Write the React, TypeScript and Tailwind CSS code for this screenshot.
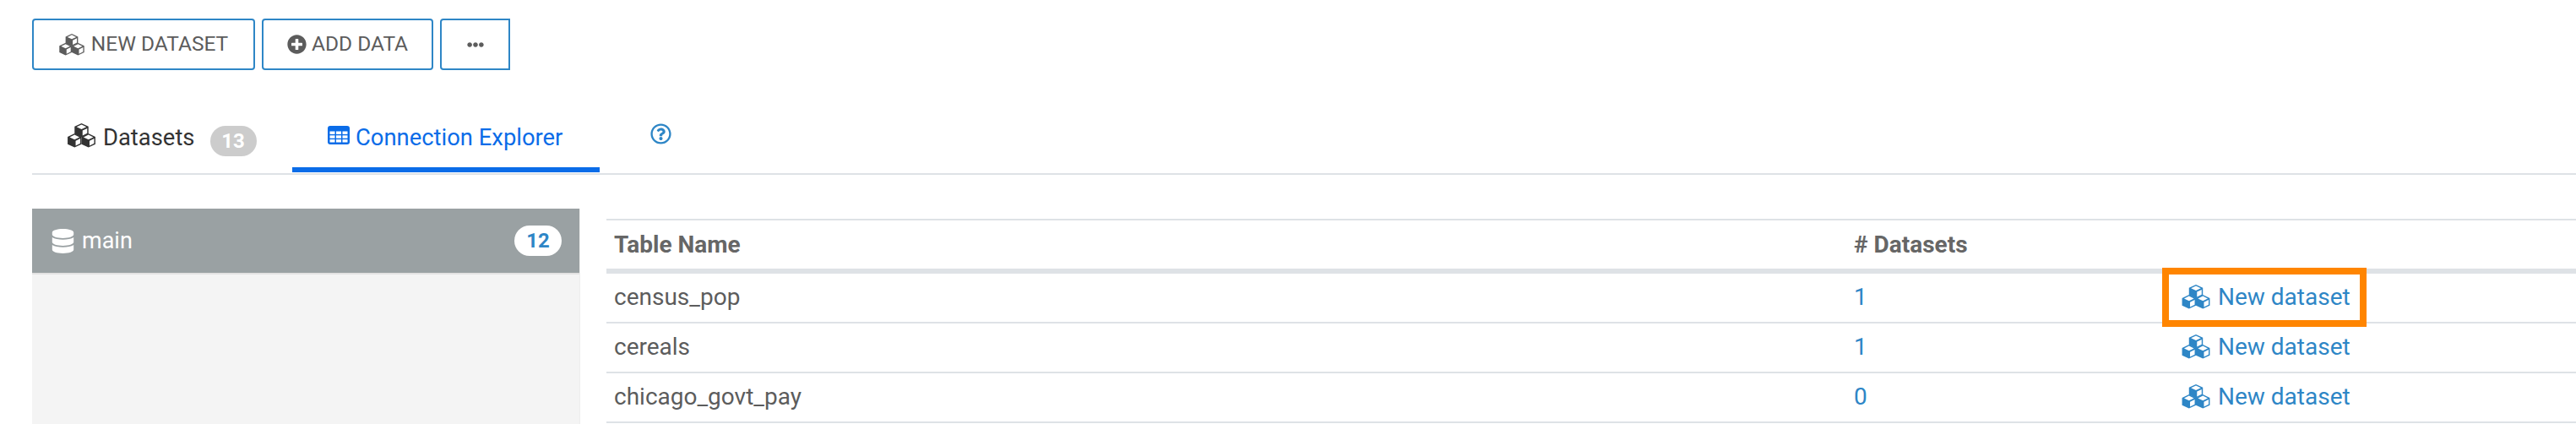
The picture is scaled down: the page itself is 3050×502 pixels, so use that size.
import { FaDatabase, FaEllipsisH, FaPlusCircle, FaRegQuestionCircle } from "react-icons/fa";

const rows = [
  { name: "census_pop", count: 1, highlight: true },
  { name: "cereals", count: 1 },
  { name: "chicago_govt_pay", count: 0 },
];

// font-awesome 4 style cubes: solid hexagons with white top and right faces
const cubes = [
  [17, 8.5],
  [8.5, 21],
  [25.5, 21],
];

const Cubes = ({ className }: { className: string }) => (
  <svg viewBox="0 0 34 30" className={className} fill="currentColor">
    {cubes.map(([x, y]) => (
      <g key={`${x}-${y}`}>
        <polygon
          points={`${x},${y - 8.5} ${x + 8.5},${y - 4.5} ${x + 8.5},${y + 4.5} ${x},${y + 8.5} ${x - 8.5},${y + 4.5} ${x - 8.5},${y - 4.5}`}
        />
        <polygon
          fill="#fff"
          points={`${x},${y - 7} ${x + 6},${y - 4} ${x},${y - 1.2} ${x - 6},${y - 4}`}
        />
        <polygon
          fill="#fff"
          points={`${x + 1.3},${y + 0.4} ${x + 7},${y - 2.4} ${x + 7},${y + 3.6} ${x + 1.3},${y + 6.4}`}
        />
      </g>
    ))}
  </svg>
);

const TableIcon = () => (
  <svg viewBox="0 0 26 22" className="mt-[6px] h-[22px] w-[26px] shrink-0">
    <rect width="26" height="22" rx="3" fill="currentColor" />
    {[6.5, 11.3, 16.1].map((y) =>
      [2.5, 10, 17.5].map((x) => <rect key={`${x}-${y}`} x={x} y={y} width="6" height="3.4" fill="#fff" />)
    )}
  </svg>
);

export default function App() {
  return (
    <div className="h-[502px] w-[3050px] overflow-hidden bg-white pl-[38px] pt-[22px] font-['Roboto',sans-serif] text-[#5c5c5c]">
      {/* Toolbar */}
      <div className="flex h-[61px] gap-2 text-[24.5px]">
        <button className="flex w-[264px] items-center justify-center gap-[8px] rounded-[4px] border-2 border-[#2e86c6]">
          <Cubes className="h-[26px] w-[30px]" />
          NEW DATASET
        </button>
        <button className="flex w-[203px] items-center justify-center gap-[6px] rounded-[4px] border-2 border-[#2e86c6]">
          <FaPlusCircle size={23} />
          ADD DATA
        </button>
        <button className="flex w-[83px] items-center justify-center rounded-l-[4px] border-2 border-[#2e86c6]">
          <FaEllipsisH size={20} />
        </button>
      </div>

      {/* Tabs */}
      <div className="mt-[55px] flex h-[69px] border-b-2 border-[#dee2e6] text-[27.4px]">
        <div className="flex w-[308px] items-start gap-[9px] pl-[42px] pt-[5px] text-[#333]">
          <Cubes className="mt-[3px] h-[29px] w-[33px] shrink-0" />
          <span>Datasets</span>
          <span className="ml-[9px] mt-[6px] flex h-[36px] w-[55px] items-center justify-center rounded-full bg-[#ccc] text-[24px] font-bold text-white">
            13
          </span>
        </div>
        <div className="flex h-[66px] w-[364px] items-start gap-[7px] border-b-[6px] border-[#0a6ce8] pl-[42px] pt-[5px] text-[#0a6ce8]">
          <TableIcon />
          <span>Connection Explorer</span>
        </div>
        <div className="pl-[60px] pt-[8px] text-[#2e86c6]">
          <FaRegQuestionCircle size={25} />
        </div>
      </div>

      {/* Body */}
      <div className="mt-10 flex gap-[31px]">
        {/* Sidebar */}
        <aside className="h-[300px] w-[649px] shrink-0 border-r border-[#eee] bg-[#f4f4f4]">
          <div className="flex h-[78px] items-center justify-between border-b-2 border-[#e2e2e2] bg-[#9aa1a3] pl-[22px] pr-[21px] text-[27px] text-white">
            <div className="flex items-center gap-[8px]">
              <FaDatabase size={29} />
              <span>main</span>
            </div>
            <span className="flex h-[36px] w-[56px] items-center justify-center rounded-full bg-white text-[24px] font-bold text-[#2e86c6]">
              12
            </span>
          </div>
        </aside>

        {/* Table */}
        <div className="mt-3 min-w-0 flex-1 text-[28px]">
          <div className="grid h-[65px] grid-cols-[1468px_388px_1fr] items-center border-t-2 border-b-[6px] border-[#dee2e6] pl-[9px] font-bold text-[#666]">
            <div>Table Name</div>
            <div># Datasets</div>
            <div />
          </div>
          {rows.map((row) => (
            <div
              key={row.name}
              className="grid h-[59px] grid-cols-[1468px_388px_1fr] items-center border-b-2 border-[#dee2e6] pb-[2px] pl-[9px]"
            >
              <div>{row.name}</div>
              <div className="text-[#2e86c6]">{row.count}</div>
              <div className="relative flex items-center gap-[9px] text-[#2e86c6]">
                <Cubes className="h-[29px] w-[34px]" />
                <span>New dataset</span>
                {row.highlight && (
                  <div className="absolute left-[-23px] top-[-14px] h-[70px] w-[242px] border-[8px] border-[#ff8500]" />
                )}
              </div>
            </div>
          ))}
        </div>
      </div>
    </div>
  );
}
